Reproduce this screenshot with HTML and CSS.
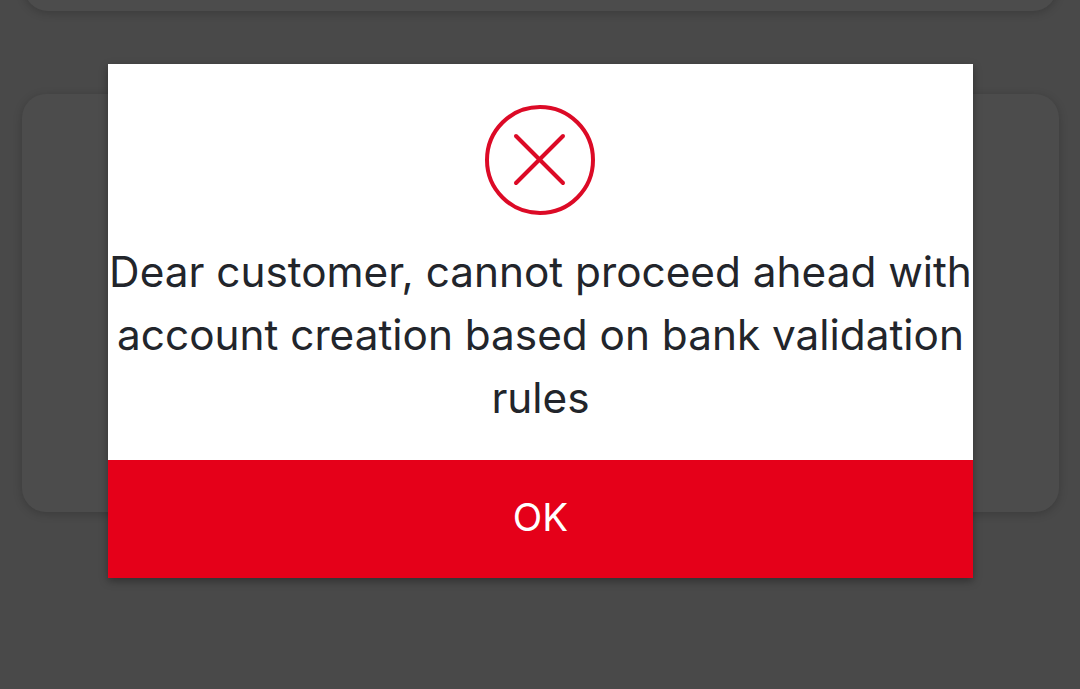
FILE: index.html
```html
<!DOCTYPE html>
<html lang="en">
<head>
    <meta charset="UTF-8">
    <title>Account creation</title>
    <link rel="stylesheet" href="styles.css">
</head>
<body>
    <div class="backdrop">
        <div class="card card-top"></div>
        <div class="card card-main"></div>
    </div>

    <div class="dialog">
        <div class="dialog-body">
            <svg class="error-icon" width="112" height="112" viewBox="0 0 112 112" fill="none" stroke="#dc0a26">
                <circle cx="55" cy="55" r="53" stroke-width="4"></circle>
                <line x1="31" y1="31" x2="78" y2="78" stroke-width="4" stroke-linecap="round"></line>
                <line x1="78" y1="31" x2="31" y2="78" stroke-width="4" stroke-linecap="round"></line>
            </svg>
            <p class="message">Dear customer, cannot proceed ahead with account creation based on bank validation rules</p>
        </div>
        <button class="ok-btn">OK</button>
    </div>
</body>
</html>
```
FILE: styles.css
```css
* {
    margin: 0;
    padding: 0;
    box-sizing: border-box;
}

body {
    width: 1080px;
    height: 689px;
    overflow: hidden;
    background: #494949;
    font-family: 'Inter', 'Noto Sans', sans-serif;
}

.backdrop {
    display: flex;
    flex-direction: column;
    gap: 83px;
    padding: 0 21px 0 22px;
    margin-top: -61px;
}

.card {
    background: #4c4c4c;
    border-radius: 24px;
    box-shadow: 0 2px 10px rgba(0,0,0,0.2);
}

.card-top {
    height: 72px;
    margin: 0 2px;
}

.card-main {
    height: 418px;
}

.dialog {
    position: absolute;
    left: 108px;
    top: 64px;
    width: 865px;
    background: #fff;
    box-shadow: 0 3px 8px rgba(0,0,0,0.35);
}

.dialog-body {
    display: flex;
    flex-direction: column;
    align-items: center;
    height: 396px;
    padding-top: 41px;
}

.message {
    margin-top: 23px;
    font-size: 42.3px;
    line-height: 63px;
    text-align: center;
    color: #22252b;
}

.ok-btn {
    display: block;
    width: 100%;
    height: 118px;
    padding-bottom: 4px;
    background: #e50019;
    border: none;
    color: #fff;
    font-family: inherit;
    font-size: 38.5px;
}
```
